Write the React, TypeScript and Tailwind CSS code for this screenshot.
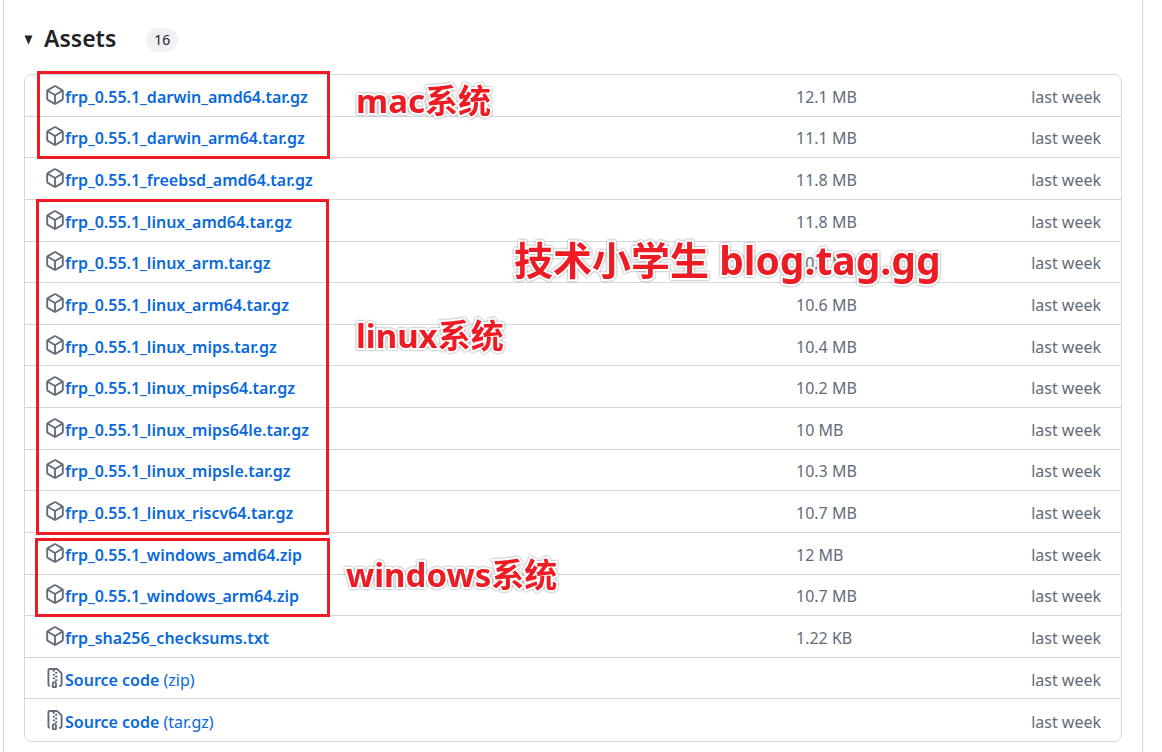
type Asset = { name: string; suffix?: string; size?: string };

const assets: Asset[] = [
  { name: "frp_0.55.1_darwin_amd64.tar.gz", size: "12.1 MB" },
  { name: "frp_0.55.1_darwin_arm64.tar.gz", size: "11.1 MB" },
  { name: "frp_0.55.1_freebsd_amd64.tar.gz", size: "11.8 MB" },
  { name: "frp_0.55.1_linux_amd64.tar.gz", size: "11.8 MB" },
  { name: "frp_0.55.1_linux_arm.tar.gz", size: "10.8 MB" },
  { name: "frp_0.55.1_linux_arm64.tar.gz", size: "10.6 MB" },
  { name: "frp_0.55.1_linux_mips.tar.gz", size: "10.4 MB" },
  { name: "frp_0.55.1_linux_mips64.tar.gz", size: "10.2 MB" },
  { name: "frp_0.55.1_linux_mips64le.tar.gz", size: "10 MB" },
  { name: "frp_0.55.1_linux_mipsle.tar.gz", size: "10.3 MB" },
  { name: "frp_0.55.1_linux_riscv64.tar.gz", size: "10.7 MB" },
  { name: "frp_0.55.1_windows_amd64.zip", size: "12 MB" },
  { name: "frp_0.55.1_windows_arm64.zip", size: "10.7 MB" },
  { name: "frp_sha256_checksums.txt", size: "1.22 KB" },
  { name: "Source code", suffix: "(zip)" },
  { name: "Source code", suffix: "(tar.gz)" },
];

function PackageIcon() {
  return (
    <svg viewBox="0 0 16 16" className="mb-1 size-5 shrink-0 fill-[#636c76]" aria-hidden="true">
      <path d="m8.878.392 5.25 3.045c.54.314.872.89.872 1.514v6.098a1.75 1.75 0 0 1-.872 1.514l-5.25 3.045a1.75 1.75 0 0 1-1.756 0l-5.25-3.045A1.75 1.75 0 0 1 1 11.049V4.951c0-.624.332-1.201.872-1.514L7.122.392a1.75 1.75 0 0 1 1.756 0ZM7.875 1.69l-4.63 2.685L8 7.133l4.755-2.758-4.63-2.685a.248.248 0 0 0-.25 0ZM2.5 5.677v5.372c0 .09.047.171.125.216l4.625 2.683V8.432Zm6.25 8.271 4.625-2.683a.25.25 0 0 0 .125-.216V5.677L8.75 8.432Z" />
    </svg>
  );
}

function ZipIcon() {
  return (
    <svg viewBox="0 0 16 16" className="mb-1 size-5 shrink-0 fill-[#636c76]" aria-hidden="true">
      <path d="M3.5 1.75v11.5c0 .09.048.173.126.217a.75.75 0 0 1-.752 1.298A1.748 1.748 0 0 1 2 13.25V1.75C2 .784 2.784 0 3.75 0h5.586c.464 0 .909.185 1.237.513l2.914 2.914c.329.328.513.773.513 1.237v8.586A1.75 1.75 0 0 1 12.25 15h-.5a.75.75 0 0 1 0-1.5h.5a.25.25 0 0 0 .25-.25V4.664a.25.25 0 0 0-.073-.177L9.513 1.573a.25.25 0 0 0-.177-.073H7.25a.75.75 0 0 1 0 1.5h-.5a.75.75 0 0 1 0-1.5h-3a.25.25 0 0 0-.25.25Zm3.75 8.75h.5c.966 0 1.75.784 1.75 1.75v3a.75.75 0 0 1-.75.75h-2.5a.75.75 0 0 1-.75-.75v-3c0-.966.784-1.75 1.75-1.75ZM6 5.25a.75.75 0 0 1 .75-.75h.5a.75.75 0 0 1 0 1.5h-.5A.75.75 0 0 1 6 5.25Zm.75 2.25h.5a.75.75 0 0 1 0 1.5h-.5a.75.75 0 0 1 0-1.5ZM8 6.75A.75.75 0 0 1 8.75 6h.5a.75.75 0 0 1 0 1.5h-.5A.75.75 0 0 1 8 6.75ZM8.75 3h.5a.75.75 0 0 1 0 1.5h-.5a.75.75 0 0 1 0-1.5ZM8 9.75A.75.75 0 0 1 8.75 9h.5a.75.75 0 0 1 0 1.5h-.5A.75.75 0 0 1 8 9.75Zm-1 2.5v2.25h1v-2.25a.25.25 0 0 0-.25-.25h-.5a.25.25 0 0 0-.25.25Z" />
    </svg>
  );
}

function AssetRow({ asset }: { asset: Asset }) {
  return (
    <li className="flex items-center border-b border-[#d4d8dd] px-5 pt-[3px] leading-6 last:border-b-0">
      <div className="flex min-w-0 flex-[751] items-center">
        {asset.suffix ? <ZipIcon /> : <PackageIcon />}
        <a href="#" className="truncate font-semibold text-[#0969da]">
          {asset.name}
          {asset.suffix && <span className="font-normal"> {asset.suffix}</span>}
        </a>
      </div>
      <div className="flex flex-[305] items-center justify-between whitespace-nowrap text-[#636c76]">
        <span>{asset.size}</span>
        <span>last week</span>
      </div>
    </li>
  );
}

const outline =
  "absolute whitespace-nowrap font-bold text-[#ed1c24] [paint-order:stroke_fill] [-webkit-text-stroke:4px_#fff] drop-shadow-[0_0_1px_#888]";
const frame = "pointer-events-none absolute border-3 border-[#ed1c24]";

export default function App() {
  return (
    <main className="min-h-screen overflow-hidden bg-white pr-[19px] pl-[3px] font-['Noto_Sans','Noto_Sans_CJK_SC',sans-serif] text-base text-[#1f2328]">
      <section className="min-h-screen border-x border-[#d4d8dd] px-5 pt-5 pb-[10px]">
        <details open>
          <summary className="flex h-9 list-none items-center">
            <svg viewBox="0 0 10 10" className="mt-1 mr-[10px] size-[10px] fill-[#1f2328]" aria-hidden="true">
              <path d="M0.500 0.500h8L4.500 9.500Z" />
            </svg>
            <h2 className="text-[23px] leading-9 font-semibold">Assets</h2>
            <span className="mt-1 ml-[30px] rounded-full bg-[#eff1f3] px-2 text-sm leading-6">16</span>
          </summary>
          <div className="relative mt-[18px]">
            <ul className="grid min-h-[668px] auto-rows-fr rounded-lg border border-[#d4d8dd]">
              {assets.map((asset, i) => (
                <AssetRow key={i} asset={asset} />
              ))}
            </ul>
            <div className={`${frame} top-[-3px] left-[13px] h-[88px] w-[293px]`} />
            <div className={`${frame} top-[125px] left-3 h-[336px] w-[293px]`} />
            <div className={`${frame} top-[464px] left-[11px] h-[79px] w-[295px]`} />
            <p className={`${outline} top-[3px] left-[332px] text-[33px] leading-[48px]`}>mac系统</p>
            <p className={`${outline} top-[238px] left-[332px] text-[33px] leading-[48px]`}>linux系统</p>
            <p className={`${outline} top-[477px] left-[322px] text-[33px] leading-[48px]`}>windows系统</p>
            <p className={`${outline} top-[158px] left-[490px] text-[39px] leading-[56px]`}>技术小学生 blog.tag.gg</p>
          </div>
        </details>
      </section>
    </main>
  );
}
